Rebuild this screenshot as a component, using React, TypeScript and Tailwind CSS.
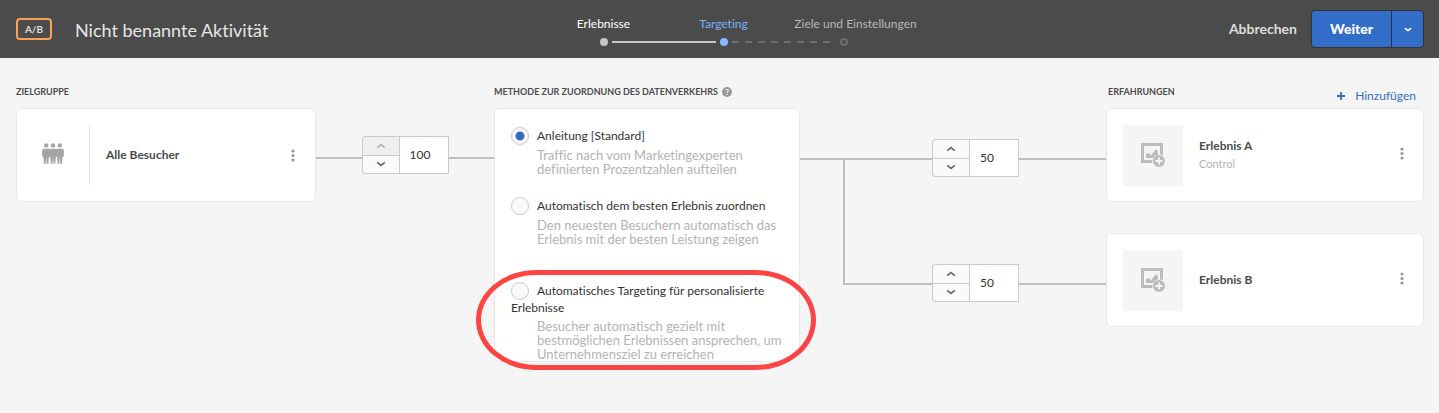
import React, { useState } from "react";

function Chevron({ up = false, className = "" }: { up?: boolean; className?: string }) {
  return (
    <svg viewBox="0 0 10 6" className={`h-1.5 w-2.5 ${className}`} fill="none" stroke="currentColor" strokeWidth="1.8" aria-hidden="true">
      <path d={up ? "M1.2 4.6 5 1.6 8.8 4.6" : "M1.2 1.4 5 4.4 8.8 1.4"} />
    </svg>
  );
}

function PeopleIcon() {
  return (
    <svg viewBox="0 0 22 21" className="h-[21px] w-[22px] fill-[#a5a5a5]" aria-hidden="true">
      {[4.2, 11, 17.8].map((x) => (
        <g key={x}>
          <circle cx={x} cy="2.4" r="2.2" />
          <path d={`M${x - 2.2} 5.8h4.4q1.9 0 1.9 2v4.800q0 1.300-1.300 1.300l-.6 6.800h-1.700l-.3-5.200h-.4l-.3 5.200h-1.700l-.6-6.800q-1.300 0-1.300-1.300V7.800q0-2 1.900-2z`} />
        </g>
      ))}
    </svg>
  );
}

function ImageAddIcon() {
  return (
    <svg viewBox="0 0 24 24" className="h-6 w-6" aria-hidden="true">
      <path fill="#bcbcbc" fillRule="evenodd" d="M0 0h22v12.300a7 7 0 0 0-3-.8V3H3v14h8.200a7.500 7.500 0 0 0 .3 3H0z" />
      <path fill="#bcbcbc" d="M5 15v-3.500L7.500 9.800l2.500 2.600L13.300 8 15 6l2 2.500v3.200a7 7 0 0 0-5 3.300z" />
      <circle cx="18" cy="18" r="6" fill="#bcbcbc" />
      <path d="M18 14.400v7.200M14.400 18h7.200" stroke="#f5f5f5" strokeWidth="1.800" />
    </svg>
  );
}

function MoreButton({ label }: { label: string }) {
  return (
    <button type="button" aria-label={label} className="flex h-6 w-4 items-center justify-center text-[#959595]">
      <svg viewBox="0 0 4 13" className="h-[13px] w-1 fill-current" aria-hidden="true">
        <circle cx="2" cy="2" r="1.600" />
        <circle cx="2" cy="6.500" r="1.600" />
        <circle cx="2" cy="11" r="1.600" />
      </svg>
    </button>
  );
}

function Stepper({ label, initial, max = 100 }: { label: string; initial: number; max?: number }) {
  const [value, setValue] = useState(initial);
  const atMax = value >= max;
  return (
    <div className="flex h-[38px] w-[87px] shrink-0">
      <div className="flex w-[37px] flex-col rounded-l border border-r-0 border-[#cacaca] bg-[#fafafa] text-[#6b6b6b]">
        <button
          type="button"
          aria-label={`${label} erhöhen`}
          disabled={atMax}
          onClick={() => setValue(value + 1)}
          className="flex flex-1 items-center justify-center rounded-tl border-b border-[#cacaca] disabled:bg-[#efefef] disabled:text-[#b5b5b5]"
        >
          <Chevron up />
        </button>
        <button
          type="button"
          aria-label={`${label} verringern`}
          onClick={() => setValue(Math.max(0, value - 1))}
          className="flex flex-1 items-center justify-center"
        >
          <Chevron />
        </button>
      </div>
      <input
        aria-label={label}
        inputMode="numeric"
        value={value}
        onChange={(e) => setValue(Number(e.target.value) || 0)}
        className="w-[50px] border border-[#cacaca] bg-white px-2.5 text-xs text-[#323232] outline-none"
      />
    </div>
  );
}

function Line({ className = "" }: { className?: string }) {
  return <div className={`h-0.5 flex-1 bg-[#bfbfbf] ${className}`} />;
}

function Header() {
  return (
    <header className="grid h-[58px] grid-cols-[1fr_auto_1fr] items-center bg-[#4b4b4b] pr-[15px] pl-4">
      <div className="flex items-center">
        <span className="flex h-[22px] w-9 items-center justify-center rounded border-2 border-[#f9a254] text-[10px] font-bold text-[#dcdcdc]">
          A/B
        </span>
        <h1 className="ml-[23px] pt-0.5 text-lg leading-6 text-[#e6e6e6]">Nicht benannte Aktivität</h1>
      </div>
      <nav aria-label="Schritte" className="pt-1 pl-[7px]">
        <ol className="grid grid-cols-[120px_120px_120px] text-xs leading-4 whitespace-nowrap">
          <li className="flex justify-center text-white">Erlebnisse</li>
          <li className="flex justify-center text-[#78b2ff]" aria-current="step">Targeting</li>
          <li className="flex justify-center pl-6 text-[#b8b8b8]">Ziele und Einstellungen</li>
        </ol>
        <div className="mt-1.5 flex items-center gap-1 px-14">
          <span className="h-2 w-2 rounded-full bg-[#c6c6c6]" />
          <span className="h-0.5 flex-1 bg-[#c6c6c6]" />
          <span className="h-2 w-2 rounded-full bg-[#86b9ff]" />
          <span className="h-0.5 flex-1 bg-[repeating-linear-gradient(90deg,#6e6e6e_0_7px,transparent_7px_13px)]" />
          <span className="h-2 w-2 rounded-full border-2 border-[#6e6e6e]" />
        </div>
      </nav>
      <div className="flex items-center justify-end">
        <button type="button" className="mr-3.5 text-sm font-bold text-[#dedede]">Abbrechen</button>
        <div className="flex h-[38px] gap-px rounded border border-[#323232] bg-[#323232] text-white">
          <button type="button" className="w-[79px] rounded-l-[3px] bg-[#326ec8] text-sm font-black">Weiter</button>
          <button type="button" aria-label="Weitere Optionen" className="flex w-[31px] items-center justify-center rounded-r-[3px] bg-[#326ec8]">
            <Chevron className="h-[5px] w-2" />
          </button>
        </div>
      </div>
    </header>
  );
}

const methods = [
  { id: "manual", title: "Anleitung [Standard]", text: "Traffic nach vom Marketingexperten definierten Prozentzahlen aufteilen", gap: "" },
  { id: "allocate", title: "Automatisch dem besten Erlebnis zuordnen", text: "Den neuesten Besuchern automatisch das Erlebnis mit der besten Leistung zeigen", gap: "mt-[21px]" },
  { id: "target", title: "Automatisches Targeting für personalisierte Erlebnisse", text: "Besucher automatisch gezielt mit bestmöglichen Erlebnissen ansprechen, um Unternehmensziel zu erreichen", gap: "mt-9" },
];

function MethodCard() {
  const [method, setMethod] = useState("manual");
  return (
    <div className="relative">
      <div className="rounded-md border border-[#e8e8e8] bg-white pt-[18px] pr-3 pl-4">
        {methods.map((m) => (
          <div key={m.id} className={m.gap}>
            <label htmlFor={m.id} className="block text-xs leading-4 text-[#323232]">
              <input
                id={m.id}
                type="radio"
                name="method"
                checked={method === m.id}
                onChange={() => setMethod(m.id)}
                className="mr-2 inline-block h-[18px] w-[18px] appearance-none rounded-full border border-[#cacaca] bg-[#fafafa] align-[-5px] checked:bg-[radial-gradient(circle,#326ec8_0_4px,transparent_5px)]"
              />
              {m.title}
            </label>
            <p className="mt-[3px] ml-[26px] text-[13px] leading-[14px] text-[#b3b3b3]">{m.text}</p>
          </div>
        ))}
      </div>
      <div className="pointer-events-none absolute top-[162px] -right-4 -left-[18px] h-[100px] rounded-[60px/50px] border-[5px] border-[#fd4444]" />
    </div>
  );
}

function Label({ children }: { children: React.ReactNode }) {
  return <h2 className="text-[9px] font-bold leading-3 text-[#4b4b4b]">{children}</h2>;
}

function ExperienceCard({ name, note }: { name: string; note?: string }) {
  return (
    <div className="flex h-[94px] items-center rounded-md border border-[#e8e8e8] bg-white pr-[13px] pl-4">
      <div className="flex h-[61px] w-[60px] shrink-0 items-center justify-center bg-[#f5f5f5]">
        <ImageAddIcon />
      </div>
      <div className="ml-4 flex-1">
        <h3 className="text-xs font-bold leading-5 text-[#4b4b4b]">{name}</h3>
        {note && <p className="pb-[3px] text-[11px] leading-4 text-[#b3b3b3]">{note}</p>}
      </div>
      <div className="pb-1">
        <MoreButton label={`Optionen für ${name}`} />
      </div>
    </div>
  );
}

export default function App() {
  return (
    <div className="min-h-screen bg-[#f5f5f5] font-['Lato','Noto_Sans',sans-serif] [font-variant-ligatures:none]">
      <Header />
      <main className="grid grid-cols-[300px_178fr_306px_306fr_318px] pr-[15px] pl-4">
        <section>
          <div className="flex h-[50px] items-center pt-[18px]">
            <Label>ZIELGRUPPE</Label>
          </div>
          <div className="flex h-[94px] items-center rounded-md border border-[#e8e8e8] bg-white pr-3.5">
            <div className="flex h-[60px] w-[73px] items-center justify-center border-r border-[#e1e1e1] pb-1">
              <PeopleIcon />
            </div>
            <h3 className="ml-4 flex-1 text-xs font-bold text-[#4b4b4b]">Alle Besucher</h3>
            <MoreButton label="Optionen für Alle Besucher" />
          </div>
        </section>

        <div className="flex items-start pt-[78px]">
          <Line className="mt-[21px]" />
          <Stepper label="Anteil Alle Besucher" initial={100} />
          <Line className="mt-[21px]" />
        </div>

        <section>
          <div className="flex h-[50px] items-center gap-1 pt-[18px]">
            <Label>METHODE ZUR ZUORDNUNG DES DATENVERKEHRS</Label>
            <button type="button" aria-label="Hilfe" className="flex h-2.5 w-2.5 items-center justify-center rounded-full bg-[#999999] text-[8px] leading-none font-black text-[#f5f5f5]">
              ?
            </button>
          </div>
          <MethodCard />
        </section>

        <div className="flex items-start pt-[50px]">
          <div className="flex w-[14%] pt-[50px]">
            <Line />
          </div>
          <div className="mt-[50px] h-[127px] w-0.5 bg-[#bfbfbf]" />
          <div className="flex flex-1 flex-col gap-[87px] pt-[31px]">
            {["Anteil Erlebnis A", "Anteil Erlebnis B"].map((label) => (
              <div key={label} className="flex items-start">
                <Line className="mt-[19px]" />
                <Stepper label={label} initial={50} />
                <Line className="mt-[19px]" />
              </div>
            ))}
          </div>
        </div>

        <section>
          <div className="flex h-[50px] items-center justify-between pt-[18px] pr-2 pl-0.5">
            <Label>ERFAHRUNGEN</Label>
            <button type="button" className="flex items-center gap-2.5 pt-2 text-xs text-[#326ec8]">
              <svg viewBox="0 0 8 8" className="h-2 w-2" stroke="currentColor" strokeWidth="1.800" aria-hidden="true">
                <path d="M4 0v8M0 4h8" />
              </svg>
              Hinzufügen
            </button>
          </div>
          <div className="flex flex-col gap-[31px]">
            <ExperienceCard name="Erlebnis A" note="Control" />
            <ExperienceCard name="Erlebnis B" />
          </div>
        </section>
      </main>
    </div>
  );
}
